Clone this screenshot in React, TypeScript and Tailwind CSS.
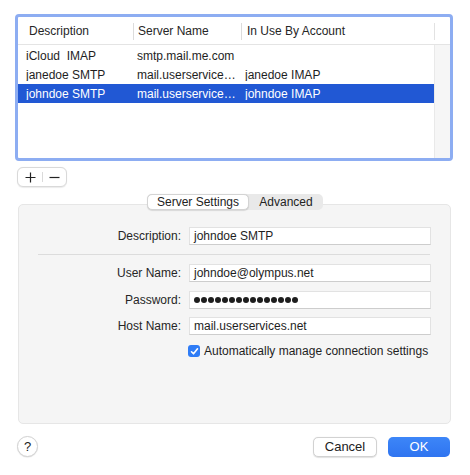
import React from "react";

const rows = [
  { d: "iCloud  IMAP", s: "smtp.mail.me.com", u: "" },
  { d: "janedoe SMTP", s: "mail.userservices.net", u: "janedoe IMAP" },
  { d: "johndoe SMTP", s: "mail.userservices.net", u: "johndoe IMAP", sel: true },
];

function Field({ label, children }: { label: string; children: React.ReactNode }) {
  return (
    <div className="flex items-center">
      <div className="w-[162px] text-right text-[#262626]">{label}</div>
      <div className="ml-[8px] w-[242px] h-[18px] bg-white border border-[#e2e2e2] border-b-[#cdcdcd] flex items-center pl-[4px] text-[#1e1e1e]">
        {children}
      </div>
    </div>
  );
}

export default function App() {
  return (
    <div className="w-[470px] h-[475px] bg-white flex flex-col font-['Liberation_Sans','Helvetica',sans-serif] text-[12px] text-[#262626] leading-none">
      {/* Table */}
      <div className="mt-[14px] ml-[15px] w-[438px] h-[147px] border-[3px] border-[#8dadf2] rounded-[4px] flex flex-col overflow-hidden bg-white">
        <div className="h-[28px] pt-[1px] flex items-center border-b border-[#e4e4e4] shrink-0">
          <div className="w-[115px] pl-[11px]">Description</div>
          <div className="w-[108px] flex items-center">
            <div className="w-px h-[17px] bg-[#dcdcdc]" />
            <span className="pl-[4px]">Server Name</span>
          </div>
          <div className="w-[193px] flex items-center">
            <div className="w-px h-[17px] bg-[#dcdcdc]" />
            <span className="pl-[5px]">In Use By Account</span>
          </div>
          <div className="w-[16px] flex items-center">
            <div className="w-px h-[17px] bg-[#e2e2e2]" />
          </div>
        </div>
        <div className="flex-1 flex">
          <div className="w-[416px] pt-[1px]">
            {rows.map((r, i) => (
              <div
                key={i}
                className={`h-[19px] flex items-center ${r.sel ? "bg-[#2158d4] text-white" : "text-[#1e1e1e]"}`}
              >
                <div className="w-[115px] pl-[8px] whitespace-pre truncate">{r.d}</div>
                <div className="w-[108px] pl-[4px] pr-[3px] truncate">{r.s}</div>
                <div className="w-[193px] pl-[4px] truncate">{r.u}</div>
              </div>
            ))}
          </div>
          <div className="w-[16px] bg-[#f6f6f6] border-l border-[#e9e9e9]" />
        </div>
      </div>

      {/* +/- */}
      <div className="mt-[6px] ml-[17px] w-[50px] h-[20px] bg-white border border-[#d9d9d9] rounded-[6px] shadow-[0_0.5px_1px_rgba(0,0,0,0.08)] flex items-center text-[#222]">
        <div className="w-[24px] h-full flex items-center justify-center">
          <svg width="11" height="11" viewBox="0 0 11 11">
            <path d="M5.5 0.5v10M0.5 5.5h10" stroke="#222" strokeWidth="1.2" />
          </svg>
        </div>
        <div className="w-px h-[10px] bg-[#dadada]" />
        <div className="flex-1 h-full flex items-center justify-center">
          <svg width="11" height="11" viewBox="0 0 11 11">
            <path d="M0.5 5.5h10" stroke="#222" strokeWidth="1.2" />
          </svg>
        </div>
      </div>

      {/* Segmented control */}
      <div className="relative z-10 mt-[7px] ml-[147px] w-[176px] h-[16px] bg-[#e9e9e9] rounded-[5px] flex items-center">
        <div className="w-[102px] h-[16px] bg-white rounded-[5px] border border-[#d4d4d4] shadow-[0_0.5px_1px_rgba(0,0,0,0.12)] flex items-center justify-center text-[#222]">
          Server Settings
        </div>
        <div className="flex-1 flex items-center justify-center text-[#222]">Advanced</div>
      </div>

      {/* Panel */}
      <div className="-mt-[6px] ml-[18px] w-[433px] h-[220px] bg-[#f5f5f5] border border-[#e6e6e6] rounded-[5px] flex flex-col pt-[22px]">
        <Field label="Description:">johndoe SMTP</Field>
        <div className="mt-[9px] ml-[19px] w-[392px] h-px bg-[#dcdcdc]" />
        <div className="mt-[9px]">
          <Field label="User Name:">johndoe@olympus.net</Field>
        </div>
        <div className="mt-[9px]">
          <Field label="Password:">
            <div className="flex gap-[1px]">
              {Array.from({ length: 15 }).map((_, i) => (
                <span key={i} className="w-[6px] h-[6px] rounded-full bg-[#1e1e1e]" />
              ))}
            </div>
          </Field>
        </div>
        <div className="mt-[8px]">
          <Field label="Host Name:">mail.userservices.net</Field>
        </div>
        <div className="mt-[9px] flex items-center h-[14px]">
          <div className="ml-[169px] w-[12px] h-[12px] rounded-[3px] bg-[#2f7cf6] flex items-center justify-center">
            <svg width="9" height="9" viewBox="0 0 9 9">
              <path d="M1.5 4.8l2 2 4-5" stroke="white" strokeWidth="1.6" fill="none" strokeLinecap="round" strokeLinejoin="round" />
            </svg>
          </div>
          <span className="ml-[4px] text-[#1e1e1e]">Automatically manage connection settings</span>
        </div>
      </div>

      {/* Bottom bar */}
      <div className="mt-[12px] flex items-center h-[21px]">
        <div className="ml-[17px] w-[21px] h-[21px] rounded-full bg-white border border-[#d2d2d2] shadow-[0_0.5px_1px_rgba(0,0,0,0.12)] flex items-center justify-center text-[13px] text-[#222]">
          ?
        </div>
        <div className="ml-[275px] w-[64px] h-[20px] rounded-[5px] bg-white border border-[#d2d2d2] shadow-[0_0.5px_1px_rgba(0,0,0,0.12)] flex items-center justify-center text-[13px] text-[#222]">
          Cancel
        </div>
        <div className="ml-[11px] w-[62px] h-[20px] rounded-[5px] bg-gradient-to-b from-[#3d86f8] to-[#2f74f0] flex items-center justify-center text-[13px] text-white font-medium">
          OK
        </div>
      </div>
    </div>
  );
}
